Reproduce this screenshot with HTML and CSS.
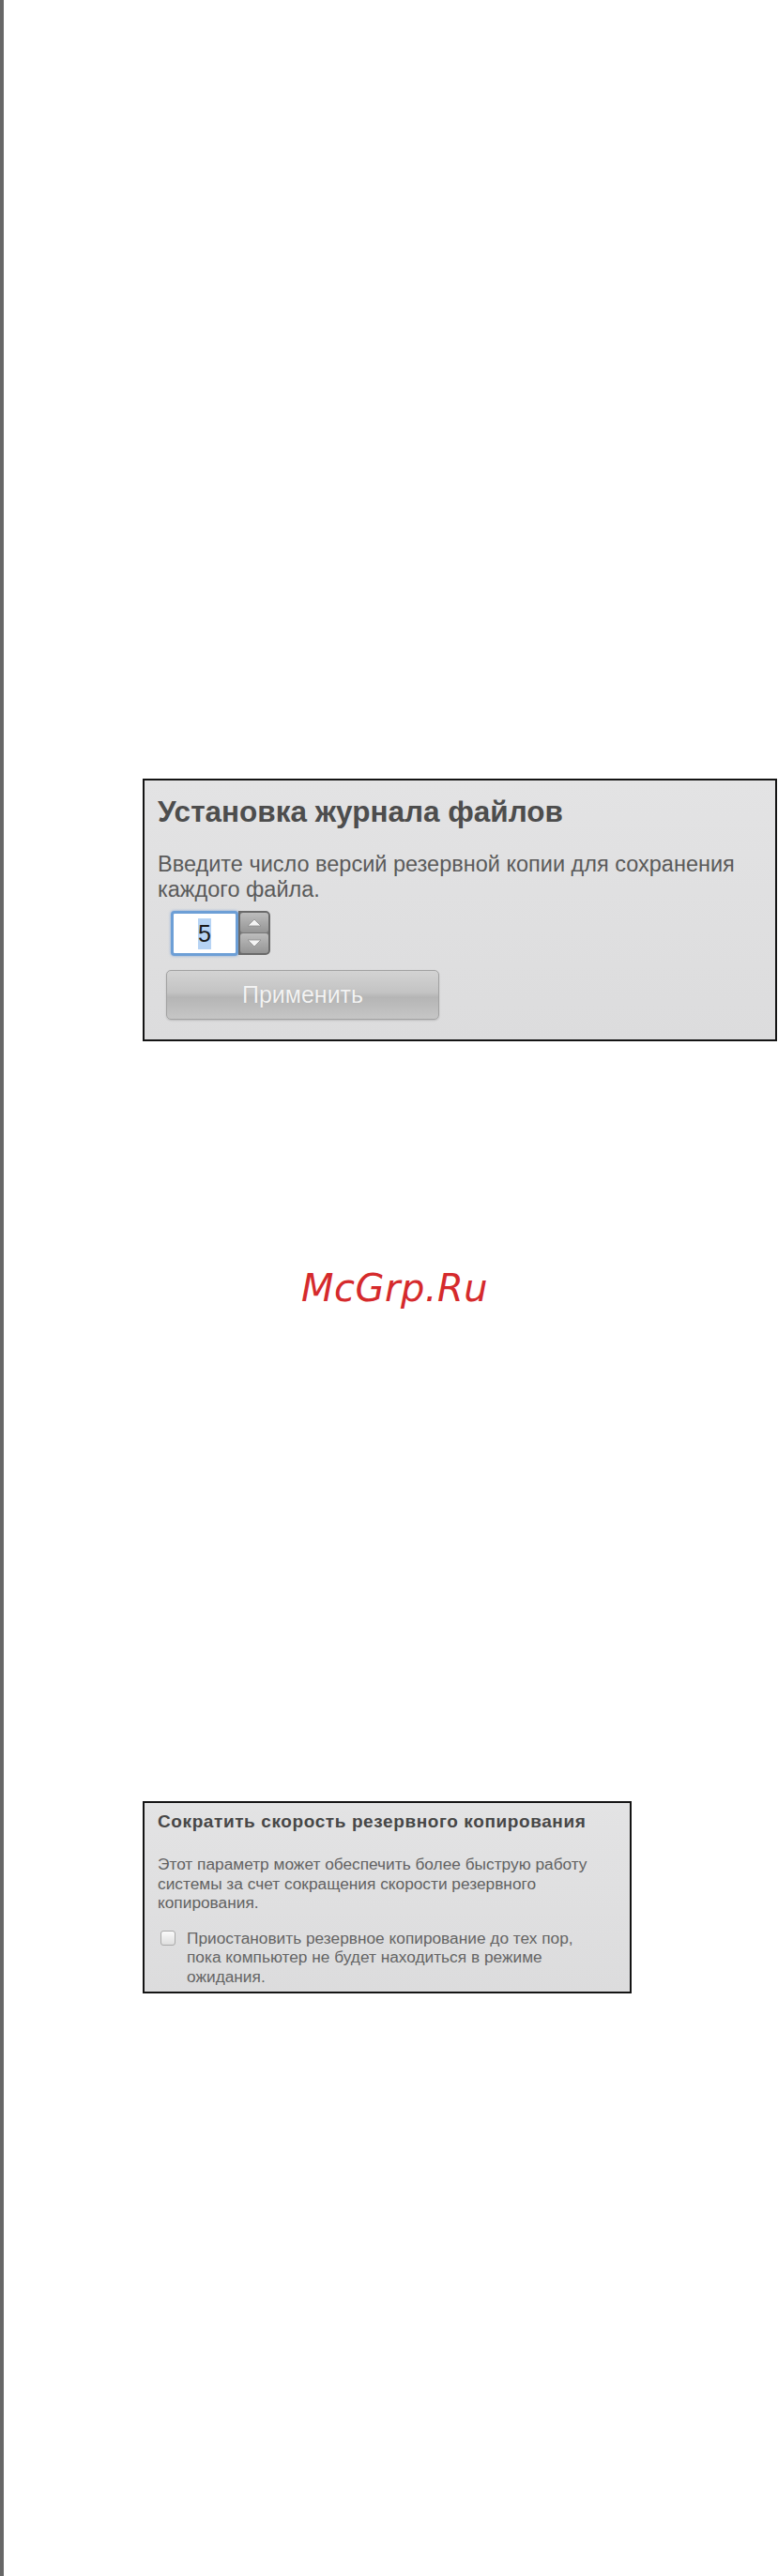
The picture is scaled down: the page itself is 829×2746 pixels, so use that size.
FILE: index.html
```html
<!DOCTYPE html>
<html lang="ru">
<head>
    <meta charset="UTF-8">
    <meta name="viewport" content="width=device-width, initial-scale=1.0">
    <title>Настройки резервного копирования</title>

    <link rel="stylesheet" href="styles.css">
</head>
<body>

<div class="page">

    <div class="panel history-panel">
        <h2 class="panel-title">Установка журнала файлов</h2>
        <p class="panel-text">Введите число версий резервной копии для сохранения каждого файла.</p>

        <div class="spinner">
            <div class="spinner-field"><span class="spinner-value">5</span></div>
            <div class="spinner-buttons">
                <span class="spinner-btn up">
                    <svg width="16" height="9" viewBox="0 0 16 9"><polygon points="1,8 8,1 15,8" fill="#f4f4f4" stroke="#8c8c8c" stroke-width="0.8"/></svg>
                </span>
                <span class="spinner-btn down">
                    <svg width="16" height="9" viewBox="0 0 16 9"><polygon points="1,1 8,8 15,1" fill="#f4f4f4" stroke="#8c8c8c" stroke-width="0.8"/></svg>
                </span>
            </div>
        </div>

        <button type="button" class="apply-button" disabled>Применить</button>
    </div>

    <div class="watermark">McGrp.Ru</div>

    <div class="panel speed-panel">
        <h3 class="panel-title small">Сократить скорость резервного копирования</h3>
        <p class="panel-text small">Этот параметр может обеспечить более быструю работу системы за счет сокращения скорости резервного копирования.</p>

        <label class="check-row">
            <span class="check-box"></span>
            <span class="check-label">Приостановить резервное копирование до тех пор, пока компьютер не будет находиться в режиме ожидания.</span>
        </label>
    </div>

</div>

</body>
</html>
```

FILE: styles.css
```css
html, body {
    margin: 0;
    padding: 0;
    background-color: #fff;
    font-family: "Liberation Sans", Arial, sans-serif;
}

.page {
    box-sizing: border-box;
    height: 2746px;
    border-left: 4px solid #676767;
    padding-top: 830px;
}

.panel {
    box-sizing: border-box;
    margin-left: 148px;
    border: 2px solid #141414;
    background: linear-gradient(to bottom, #e3e3e4, #dcdcdd);
}

/* File history block */
.history-panel {
    width: 676px;
    padding: 16px 14px 21px 14px;
}

.panel-title {
    margin: 0;
    font-size: 31.5px;
    line-height: 35px;
    font-weight: bold;
    color: #4d4d4d;
}

.panel-text {
    margin: 25px 0 0 0;
    font-size: 23.5px;
    line-height: 27px;
    color: #5a5a5a;
}

.spinner {
    display: flex;
    margin: 9px 0 0 14px;
    height: 48px;
}

.spinner-field {
    box-sizing: border-box;
    width: 72px;
    height: 48px;
    background: #fff;
    border: 3px solid #6d9fd6;
    border-radius: 4px;
    box-shadow: 0 0 3px rgba(70, 130, 210, 0.6);
    display: flex;
    align-items: center;
    padding-left: 26px;
}

.spinner-value {
    font-size: 25px;
    line-height: 33px;
    color: #1a1a1a;
    background-color: #b6d3f4;
}

.spinner-buttons {
    box-sizing: border-box;
    width: 34px;
    height: 47px;
    display: flex;
    flex-direction: column;
    background: #777;
    border: 2px solid #6a6a6a;
    border-radius: 0 5px 5px 0;
    gap: 1px;
}

.spinner-btn {
    flex: 1;
    display: flex;
    align-items: center;
    justify-content: center;
    background: linear-gradient(to bottom, #bdbdbd, #959595);
    border-radius: 3px;
}

.apply-button {
    display: block;
    box-sizing: border-box;
    width: 291px;
    height: 53px;
    margin: 15px 0 0 9px;
    padding: 0;
    border: 1px solid #a2a2a2;
    border-radius: 5px;
    background: linear-gradient(to bottom, #d3d3d3 0%, #c3c3c3 45%, #b5b5b5 55%, #c6c6c6 100%);
    box-shadow: 0 1px 2px rgba(0, 0, 0, 0.15);
    font-family: "Liberation Sans", Arial, sans-serif;
    font-size: 25px;
    color: #f3f3f3;
    text-shadow: 0 0 1px rgba(0, 0, 0, 0.15);
}

.watermark {
    margin: 241px 0 0 317px;
    font-family: "DejaVu Sans", sans-serif;
    font-style: italic;
    font-size: 40px;
    line-height: 45px;
    color: #d52a2c;
    letter-spacing: 0.5px;
}

/* Backup speed block */
.speed-panel {
    width: 521px;
    margin-top: 524px;
    padding: 9px 14px 6px 14px;
}

.panel-title.small {
    font-size: 19px;
    line-height: 22px;
    color: #474747;
    letter-spacing: 0.6px;
}

.panel-text.small {
    margin-top: 24px;
    font-size: 17.3px;
    line-height: 20.5px;
    color: #626262;
}

.check-row {
    display: flex;
    align-items: flex-start;
    margin-top: 17px;
}

.check-box {
    flex: none;
    box-sizing: border-box;
    width: 16px;
    height: 16px;
    margin: 2px 0 0 3px;
    border: 1px solid #a9a9a9;
    border-radius: 3px;
    background: linear-gradient(to bottom, #fafafa, #dedede);
}

.check-label {
    max-width: 415px;
    margin-left: 12px;
    font-size: 17.3px;
    line-height: 20.5px;
    color: #656565;
}
```
